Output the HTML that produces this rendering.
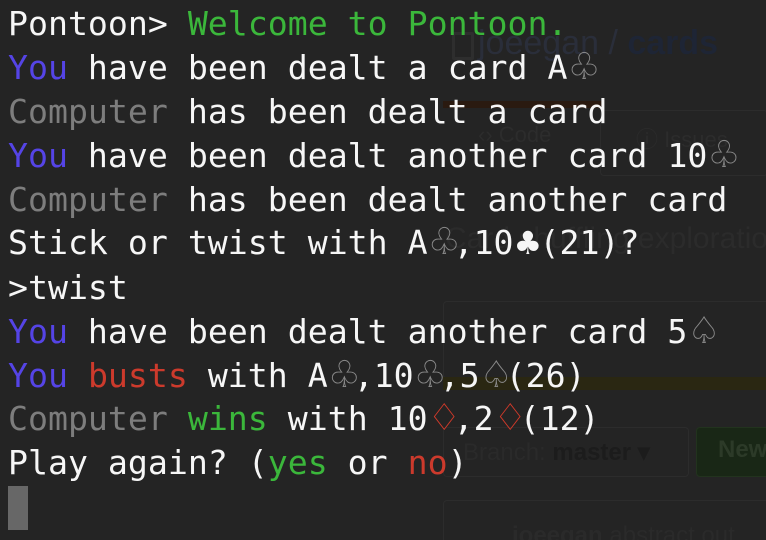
<!DOCTYPE html>
<html><head><meta charset="utf-8"><style>
html,body{margin:0;width:766px;height:540px;overflow:hidden;}
body{background:#242424;position:relative;font-family:"DejaVu Sans Mono","Liberation Mono",monospace;}
.l{position:absolute;left:8px;font-size:33.2px;line-height:44px;height:44px;color:#f6f6f6;white-space:pre;}
.p{color:#5544e6}.g{color:#7d7d7d}.gr{color:#3bb73b}.r{color:#cc3a2c}
.s,.d,.w{font-size:37px;font-family:"DejaVu Sans",sans-serif;display:inline-block;width:26px;text-align:center;line-height:0;}
.s{color:#8a8a8a}.d{color:#d23a2a}.w{color:#f6f6f6;font-size:32px}
.bg{position:absolute;font-family:"Liberation Sans",sans-serif;color:#2c2f36;white-space:pre}
.box{position:absolute;border:1px solid #2c2c2c;border-radius:4px}
</style></head><body>
<div style="position:absolute;left:452px;top:32px;width:16px;height:22px;border:3px solid #2e2e2e;border-radius:2px"></div>
<div class="bg" style="left:478px;top:24px;font-size:34px;color:#2a2e3a">joeegan / <b style="color:#1e2535">cards</b></div>
<div style="position:absolute;left:443px;top:101px;width:160px;height:7px;background:#2a1a10"></div>
<div class="box" style="left:600px;top:110px;width:166px;height:64px"></div>
<div class="bg" style="left:478px;top:122px;font-size:22px;color:#2c2c2c">‹› Code</div>
<div class="bg" style="left:636px;top:122px;font-size:22px;color:#2c2c2c">ⓘ Issues</div>
<div class="bg" style="left:445px;top:222px;font-size:30px;color:#2b2b2b">Card shuffling exploration</div>
<div class="box" style="left:443px;top:301px;width:330px;height:76px"></div>
<div style="position:absolute;left:443px;top:377px;width:330px;height:13px;background:#2a2712"></div>
<div class="box" style="left:443px;top:427px;width:244px;height:48px"></div>
<div class="bg" style="left:463px;top:438px;font-size:24px;color:#2a2a2a">Branch: <b style="color:#1c1c1c">master ▾</b></div>
<div class="box" style="left:696px;top:427px;width:80px;height:48px;background:#192716;border-color:#22331e"></div>
<div class="bg" style="left:718px;top:436px;font-size:24px;color:#2c3a28"><b>New</b></div>
<div class="box" style="left:443px;top:500px;width:330px;height:50px"></div>
<div class="bg" style="left:512px;top:522px;font-size:24px;color:#2a2a2a"><b>joeegan</b> abstract out</div>

<div class="l" style="top:2px">Pontoon> <span class="gr">Welcome to Pontoon.</span></div>
<div class="l" style="top:46px"><span class="p">You</span> have been dealt a card A<span class="s">♧</span></div>
<div class="l" style="top:90px"><span class="g">Computer</span> has been dealt a card</div>
<div class="l" style="top:134px"><span class="p">You</span> have been dealt another card 10<span class="s">♧</span></div>
<div class="l" style="top:178px"><span class="g">Computer</span> has been dealt another card</div>
<div class="l" style="top:221px">Stick or twist with A<span class="s">♧</span>,10<span class="w">♣</span>(21)?</div>
<div class="l" style="top:266px">>twist</div>
<div class="l" style="top:310px"><span class="p">You</span> have been dealt another card 5<span class="s">♤</span></div>
<div class="l" style="top:354px"><span class="p">You</span> <span class="r">busts</span> with A<span class="s">♧</span>,10<span class="s">♧</span>,5<span class="s">♤</span>(26)</div>
<div class="l" style="top:397px"><span class="g">Computer</span> <span class="gr">wins</span> with 10<span class="d">♢</span>,2<span class="d">♢</span>(12)</div>
<div class="l" style="top:441px">Play again? (<span class="gr">yes</span> or <span class="r">no</span>)</div>
<div style="position:absolute;left:8px;top:486px;width:20px;height:44px;background:#676767"></div>
</body></html>
